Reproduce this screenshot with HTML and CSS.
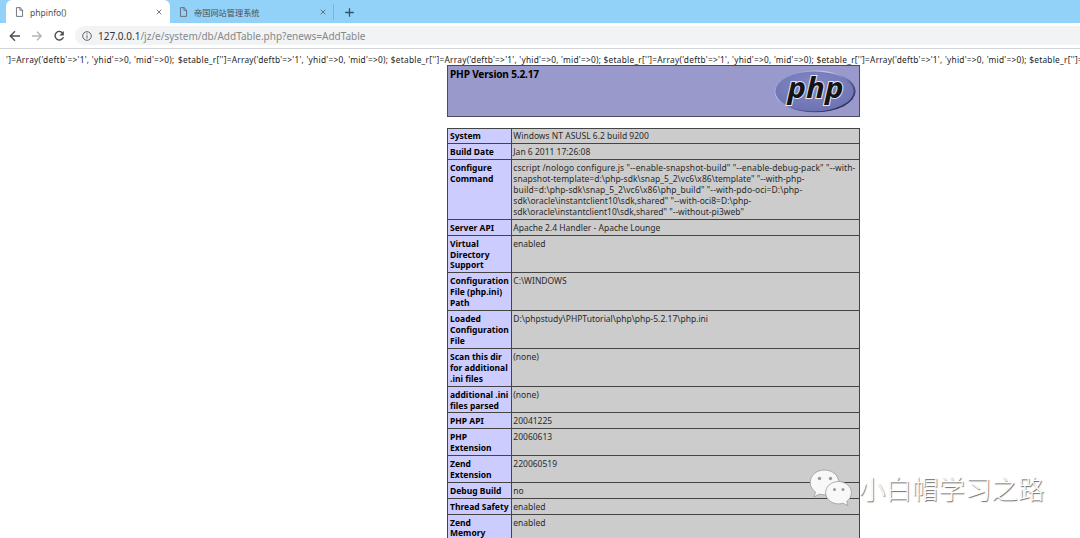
FILE: index.html
```html
<!DOCTYPE html>
<html lang="zh">
<head>
<meta charset="utf-8">
<title>phpinfo()</title>
<link rel="stylesheet" href="styles.css">
</head>
<body>
<header class="tabs">
  <div class="tab active">
    <svg class="doc" viewBox="0 0 8 11"><path d="M.5.5h4.2l2.8 2.8v7.2h-7zM4.5.5v3h3"/></svg>
    <span class="tab-title t1">phpinfo()</span>
    <svg class="close" viewBox="0 0 7 7"><path d="M.8.8l5.4 5.4M6.2.8L.8 6.2"/></svg>
  </div>
  <div class="tab idle">
    <svg class="doc" viewBox="0 0 8 11"><path d="M.5.5h4.2l2.8 2.8v7.2h-7zM4.5.5v3h3"/></svg>
    <span class="tab-title">帝国网站管理系统</span>
    <svg class="close" viewBox="0 0 7 7"><path d="M.8.8l5.4 5.4M6.2.8L.8 6.2"/></svg>
  </div>
  <svg class="plus" viewBox="0 0 9 9"><path d="M4.5.2v8.6M.2 4.5h8.6"/></svg>
</header>
<nav class="toolbar">
  <svg class="nav" viewBox="0 0 12 12"><path d="M11 6H1.5M6 1.3L1.3 6 6 10.7"/></svg>
  <svg class="nav dim" viewBox="0 0 12 12"><path d="M1 6h9.5M6 1.8L10.2 6 6 10.2"/></svg>
  <svg class="nav" viewBox="0 0 12 12"><path d="M10 3.4A4.3 4.3 0 1 0 10.4 7.2"/><path class="solid" d="M10.8 1v4.4H6.4z"/></svg>
  <div class="address">
    <svg class="info" viewBox="0 0 10 10"><circle cx="5" cy="5" r="4.3"/><path d="M5 4.3v3.2M5 2.3v1.1"/></svg>
    <span class="url"><b>127.0.0.1</b>/jz/e/system/db/AddTable.php?enews=AddTable</span>
  </div>
</nav>
<main class="page">
  <div class="dump"><span class="head">']=Array('deftb'=&gt;'1', 'yhid'=&gt;0, 'mid'=&gt;0);</span><span class="rep">$etable_r['']=Array('deftb'=&gt;'1', 'yhid'=&gt;0, 'mid'=&gt;0);</span><span class="rep">$etable_r['']=Array('deftb'=&gt;'1', 'yhid'=&gt;0, 'mid'=&gt;0);</span><span class="rep">$etable_r['']=Array('deftb'=&gt;'1', 'yhid'=&gt;0, 'mid'=&gt;0);</span><span class="rep">$etable_r['']=Array('deftb'=&gt;'1', 'yhid'=&gt;0, 'mid'=&gt;0);</span><span class="last">$etable_r['']=</span></div>
  <section class="banner">
    <h1>PHP Version 5.2.17</h1>
    <svg class="php" viewBox="0 0 82 45">
      <defs>
        <linearGradient id="rim" x1="0" y1="0" x2="1" y2="1"><stop offset="0" stop-color="#7478b0"/><stop offset=".35" stop-color="#c4c7ee"/><stop offset=".6" stop-color="#5b5f9a"/><stop offset="1" stop-color="#101230"/></linearGradient>
        <radialGradient id="disc" cx=".5" cy=".35" r=".65"><stop offset="0" stop-color="#858ac4"/><stop offset="1" stop-color="#6d72b3"/></radialGradient>
      </defs>
      <ellipse cx="41" cy="22.3" rx="40.600" ry="21" fill="url(#rim)"/>
      <ellipse cx="40.5" cy="22.3" rx="39.2" ry="19.900" fill="url(#disc)"/>
      <text class="logo-text" x="13.500" y="28.500" textLength="56" lengthAdjust="spacingAndGlyphs">php</text>
    </svg>
  </section>
  <section class="info-table">
    <div class="row"><div class="k">System</div><div class="v">Windows NT ASUSL 6.2 build 9200</div></div>
    <div class="row"><div class="k">Build Date</div><div class="v">Jan 6 2011 17:26:08</div></div>
    <div class="row"><div class="k">Configure<br>Command</div><div class="v"><span class="wide">cscript /nologo configure.js "--enable-snapshot-build" "--enable-debug-pack" "--with-</span><br><span class="mid">snapshot-template=d:\php-sdk\snap_5_2\vc6\x86\template" "--with-php-</span><br><span class="wide">build=d:\php-sdk\snap_5_2\vc6\x86\php_build" "--with-pdo-oci=D:\php-</span><br><span class="mid">sdk\oracle\instantclient10\sdk,shared" "--with-oci8=D:\php-</span><br>sdk\oracle\instantclient10\sdk,shared" "--without-pi3web"</div></div>
    <div class="row"><div class="k">Server API</div><div class="v">Apache 2.4 Handler - Apache Lounge</div></div>
    <div class="row"><div class="k">Virtual<br>Directory<br>Support</div><div class="v">enabled</div></div>
    <div class="row"><div class="k">Configuration<br>File (php.ini)<br>Path</div><div class="v">C:\WINDOWS</div></div>
    <div class="row"><div class="k">Loaded<br>Configuration<br>File</div><div class="v">D:\phpstudy\PHPTutorial\php\php-5.2.17\php.ini</div></div>
    <div class="row"><div class="k">Scan this dir<br>for additional<br>.ini files</div><div class="v">(none)</div></div>
    <div class="row"><div class="k">additional .ini<br>files parsed</div><div class="v">(none)</div></div>
    <div class="row"><div class="k">PHP API</div><div class="v">20041225</div></div>
    <div class="row"><div class="k">PHP<br>Extension</div><div class="v">20060613</div></div>
    <div class="row"><div class="k">Zend<br>Extension</div><div class="v">220060519</div></div>
    <div class="row"><div class="k">Debug Build</div><div class="v">no</div></div>
    <div class="row"><div class="k">Thread Safety</div><div class="v">enabled</div></div>
    <div class="row"><div class="k">Zend<br>Memory</div><div class="v">enabled</div></div>
  </section>
</main>
<aside class="watermark">
  <svg class="wechat" viewBox="0 0 44 38">
    <path class="bubble" d="M15.5 1C7.500 1 1.200 6.500 1.200 13.500c0 4 2 7.300 5.300 9.600L5 28l5.400-2.900c1.600.5 3.300.7 5.100.7 8 0 14.300-5.500 14.300-12.300S23.500 1 15.500 1z"/>
    <circle class="eye" cx="10.500" cy="9.500" r="1.700"/><circle class="eye" cx="21.500" cy="9.500" r="1.700"/>
    <path class="bubble" d="M29.500 12.500c-7 0-12.900 5-12.900 11.200s5.900 11.200 12.900 11.200c1.600 0 3.100-.2 4.500-.7l5 2.600-1.300-4.400c2.900-2.100 4.700-5.200 4.700-8.700 0-6.200-5.900-11.200-12.900-11.200z"/>
    <circle class="eye" cx="25.500" cy="20.500" r="1.500"/><circle class="eye" cx="34" cy="20.500" r="1.500"/>
  </svg>
  <span class="mark">小白帽学习之路</span>
</aside>
</body>
</html>
```

FILE: styles.css
```css
* { box-sizing: border-box; }
body {
  margin: 0;
  height: 538px;
  overflow: hidden;
  background: #fff;
  font-family: "Noto Sans", "Noto Sans CJK SC", sans-serif;
}
svg { display: block; flex: none; fill: none; stroke: #5f6368; overflow: visible; }

.tabs { display: flex; height: 23px; background: #93d2f8; padding-left: 6px; }
.tab { display: flex; align-items: center; height: 23px; padding-top: 1px; }
.active { width: 164px; background: #fff; border-radius: 6px 6px 0 0; padding-left: 10px; padding-right: 8px; }
.idle { width: 164px; padding-left: 10px; padding-right: 7px; border-right: 1px solid #7bb4d6; height: 16px; margin-top: 4px; padding-top: 0; }
.doc { width: 7px; height: 10px; }
.tab-title { margin-left: 7px; font-size: 8.2px; color: #4c5055; flex: 1; white-space: nowrap; }
.t1 { font-size: 8.5px; }
.close { width: 6px; height: 6px; }
.plus { width: 9px; height: 9px; margin: 8px 0 0 11px; stroke: #3c5060; stroke-width: 1.3; }

.toolbar { display: flex; align-items: center; height: 26px; padding-left: 9px; border-bottom: 1px solid #d3d5d8; }
.nav { width: 12px; height: 12px; margin-right: 10px; stroke: #4b4f54; stroke-width: 1.4; }
.dim { stroke: #b4b6b9; }
.solid { fill: #4b4f54; stroke: none; }
.address { display: flex; align-items: center; flex: 1; height: 19px; background: #f1f3f4; border-radius: 10px 0 0 10px; padding-left: 7px; }
.info { width: 10px; height: 10px; }
.url { margin-left: 6px; font-size: 10px; color: #85888c; white-space: nowrap; }
.url b { font-weight: 400; color: #303438; }

.dump { display: flex; height: 16px; padding-left: 6px; padding-top: 5px; font-size: 8.3px; line-height: 11px; letter-spacing: .26px; color: #222; white-space: nowrap; }
.head { flex: none; width: 172px; letter-spacing: .3px; }
.rep { flex: none; width: 212.8px; }
.last { flex: none; width: 51px; }

.banner { display: flex; justify-content: space-between; width: 413px; height: 52px; margin-left: 447px; background: #9999cc; border: 1px solid #4a4a5c; padding: 2px 3px 0 2px; }
.banner h1 { margin: 0; font-size: 10.1px; line-height: 13px; letter-spacing: -.18px; color: #000; }
.php { width: 82px; height: 45px; margin-top: 1px; stroke: none; }
.logo-text { font: italic bold 28px "Open Sans", sans-serif; fill: #151515; stroke: #e8e8f4; stroke-width: 1.8px; paint-order: stroke; }

.info-table { width: 413px; margin: 10.500px 0 0 447px; border: 1px solid #444; border-bottom: 0; background: #ccc; font-size: 8.5px; line-height: 10.950px; }
.row { display: flex; border-bottom: 1px solid #444; }
.k { width: 64px; background: #ccf; border-right: 1px solid #444; padding: 2.900px 0 1px 2px; font-weight: 700; color: #000; white-space: nowrap; }
.v { padding: 2.900px 0 1px 1.300px; color: #2a2a2a; white-space: nowrap; }
.wide { letter-spacing: .08px; }
.mid { letter-spacing: .035px; }

.watermark { position: absolute; left: 809px; top: 469px; display: flex; align-items: center; }
.wechat { width: 44px; height: 38px; stroke: none; }
.bubble { fill: #f8f8f8; stroke: #999; stroke-width: .8; }
.eye { fill: #999; }
.mark { margin-left: 6px; font: 300 26.500px/38px "Noto Sans CJK SC", sans-serif; color: #fff; text-shadow: .8px .8px 1px #666; white-space: nowrap; }
```
